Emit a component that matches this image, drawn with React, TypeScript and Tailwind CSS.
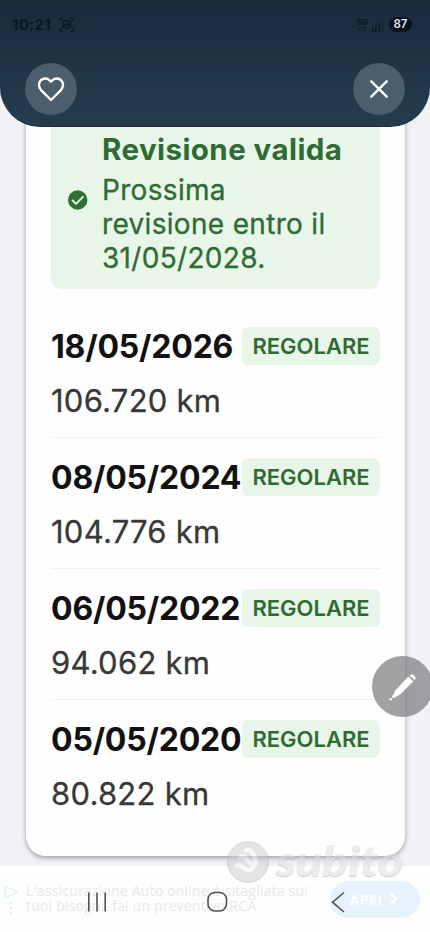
const inspections = [
  { date: "18/05/2026", km: "106.720 km" },
  { date: "08/05/2024", km: "104.776 km" },
  { date: "06/05/2022", km: "94.062 km" },
  { date: "05/05/2020", km: "80.822 km" },
];

function StatusBar() {
  return (
    <div className="flex h-[49px] items-center justify-between pl-[12px] pr-[18px] text-[#0b1520]">
      <div className="flex items-center gap-[8px]">
        <span className="text-[15px] font-bold leading-none tracking-[0.3px]">10:21</span>
        <svg width="15" height="15" viewBox="0 0 15 15" fill="none" stroke="currentColor" strokeWidth="1.3">
          <path d="M1 4V1.7Q1 1 1.7 1H4M11 1h2.3q.7 0 .7.7V4M14 11v2.3q0 .7-.7.7H11M4 14H1.700Q1 14 1 13.300V11" />
          <rect x="4" y="4" width="7.500" height="7" rx="1" />
          <path d="M4 10l2.500-2.500 1.500 1 1.500-1.500 2 2" />
        </svg>
      </div>
      <div className="flex items-center">
        <div className="flex flex-col items-center">
          <span className="text-[8px] font-bold leading-[8px]">5G</span>
          <svg width="8" height="6" viewBox="0 0 8 6" fill="none" stroke="currentColor" strokeWidth="1" opacity=".55">
            <path d="M2 5V1M.5 2.500L2 1l1.500 1.500M6 1v4M4.500 3.500L6 5l1.500-1.500" />
          </svg>
        </div>
        <svg className="ml-[3px] mt-[3px]" width="13" height="12" viewBox="0 0 13 12" fill="currentColor">
          <rect x="1" y="8" width="1.500" height="4" />
          <rect x="4" y="6" width="1.500" height="6" />
          <rect x="7.500" y="3" width="1.500" height="9" />
          <rect x="11" y="0" width="1.500" height="12" opacity=".35" />
        </svg>
        <span className="ml-[5px] flex h-[15px] w-[23px] items-center justify-center rounded-full bg-[#08111d] text-[11.500px] font-semibold leading-none text-[#dfe6ec]">
          87
        </span>
      </div>
    </div>
  );
}

function Header() {
  return (
    <header className="relative z-10 h-[127px] shrink-0 rounded-b-[40px] border-b border-[#1b2d3d] bg-linear-to-b from-[#192a3b] via-[#1f3343] to-[#263c4e]">
      <StatusBar />
      <div className="flex justify-between pl-[25px] pr-[25px] pt-[14px]">
        <button className="flex size-[52px] items-center justify-center rounded-full bg-[#4c5d6b]" aria-label="Preferiti">
          <svg width="28" height="26" viewBox="0 0 28 26" fill="none" stroke="#fff" strokeWidth="2.400" strokeLinejoin="round">
            <path d="M14 24L4.300 14.300C1.300 11.200 1.300 7 3.700 4.400C6.200 1.800 10.200 1.900 12.600 4.300L14 5.700L15.400 4.300C17.800 1.900 21.800 1.800 24.300 4.400C26.700 7 26.700 11.200 23.700 14.300Z" />
          </svg>
        </button>
        <button className="flex size-[52px] items-center justify-center rounded-full bg-[#4c5d6b]" aria-label="Chiudi">
          <svg width="20" height="20" viewBox="0 0 20 20" stroke="#fff" strokeWidth="2.400" strokeLinecap="round">
            <path d="M2.300 2.300l15.400 15.400M17.700 2.300l-15.400 15.400" />
          </svg>
        </button>
      </div>
    </header>
  );
}

function ValidityNotice() {
  return (
    <section className="flex h-[203px] items-end rounded-[10px] bg-[#e8f5e9] pb-[14px] text-[#2f6b33]">
      <svg className="mb-[65px] ml-[17px] mr-[14px] shrink-0" width="20" height="20" viewBox="0 0 20 20">
        <circle cx="9.700" cy="10" r="9.700" fill="#2e7132" />
        <path d="M4.200 10l3.800 3.800L15.400 6.300" fill="none" stroke="#e8f5e9" strokeWidth="1.900" />
      </svg>
      <div>
        <h2 className="mb-[7px] whitespace-nowrap text-[29.500px] font-bold leading-[34px] tracking-[0.430px]">Revisione valida</h2>
        <p className="whitespace-nowrap text-[28px] leading-[34px] tracking-[0.320px] [-webkit-text-stroke:0.300px_#2f6b33]">
          Prossima
          <br />
          revisione entro il
          <br />
          31/05/2028.
        </p>
      </div>
    </section>
  );
}

function AdBanner() {
  return (
    <div className="flex h-full items-center pl-[4px] pr-[10px] font-['Open_Sans',sans-serif]">
      <svg width="15" height="34" viewBox="0 0 15 34" fill="none" stroke="#e2ecf0" strokeWidth="1.300">
        <path d="M1 4v12l12-6z" />
        <path d="M7 20v2M7 25v2M7 30v2" strokeWidth="2" />
      </svg>
      <p className="-mt-[3px] ml-[7px] flex-1 whitespace-nowrap text-[14px] leading-[15px] tracking-[0.200px] text-[#e7e9ea]">
        L&apos;assicurazione Auto online è sitagliata sui
        <br />
        tuoi bisogni, fai un preventivo RCA
      </p>
      <span className="flex h-[37px] w-[90px] shrink-0 items-center justify-center gap-[8px] rounded-full bg-[#e6f2fd] pr-[2px] text-[14px] font-bold text-white">
        APRI
        <svg width="8" height="12" viewBox="0 0 8 12" fill="none" stroke="#fff" strokeWidth="2.500">
          <path d="M1 1l5 5-5 5" />
        </svg>
      </span>
    </div>
  );
}

function SystemNav() {
  return (
    <svg className="absolute left-[80px] top-[20px]" width="280" height="32" viewBox="0 0 280 32" fill="none" stroke="#505254" strokeWidth="1.600">
      <path d="M8.800 6.500v19M17 6.500v19M25.200 6.500v19" />
      <rect x="128" y="6.500" width="18.500" height="18.500" rx="7" />
      <path d="M264 6.500l-11.500 9.700 11.500 9.800" />
    </svg>
  );
}

function Watermark() {
  return (
    <div className="pointer-events-none absolute left-[226px] top-[840px] z-30 flex items-center opacity-50">
      <svg width="44" height="44" viewBox="0 0 44 44">
        <circle cx="22" cy="22" r="20.500" fill="#cbcccd" stroke="#b5b6b8" strokeWidth="1" />
        <path d="M14 17c3-2 6 1 8 4s4 4 7 3M20 10c4-1 7 3 8 6s2 5 2 8M11 25c2-1 5 1 7 3s6 3 9 0" fill="none" stroke="#f3f4f5" strokeWidth="4.500" strokeLinecap="round" />
      </svg>
      <span className="-mt-[4px] ml-[6px] origin-left scale-x-[1.160] font-['Lato',sans-serif] text-[42px] font-bold italic leading-[44px] text-[#dcdddf] [text-shadow:0_1px_1px_#999]">
        subito
      </span>
    </div>
  );
}

export default function App() {
  return (
    <div className="relative flex h-[932px] w-[430px] flex-col overflow-hidden bg-[#f1f2f6] font-['Inter',sans-serif]">
      <Header />
      <main className="-mt-[60px] h-[799px] shrink-0 pl-[26px] pr-[25px]">
        <article className="h-[789px] rounded-b-[20px] bg-[#fefefe] pl-[25px] pr-[25px] pt-[19px] shadow-[0_2px_5px_rgba(0,0,0,0.35)]">
          <ValidityNotice />
          <ul className="mt-[18px]">
            {inspections.map((item, i) => (
              <li key={item.date} className={`h-[131px] pt-[20px] ${i < 3 ? "border-b-[1.500px] border-[#f1f1f1]" : ""}`}>
                <div className="flex h-[38px] items-center justify-between">
                  <span className="w-[191px] shrink-0 whitespace-nowrap pt-[2px] text-[32px] font-bold leading-[40px] tracking-[-0.200px] text-[#121212]">{item.date}</span>
                  <span className="flex h-[38px] w-[138px] shrink-0 items-center justify-center rounded-[6px] bg-[#e8f5e9] text-[22px] font-semibold text-[#2f6b33]">
                    REGOLARE
                  </span>
                </div>
                <p className="mt-[15px] pt-[1px] text-[31px] leading-[40px] tracking-[0.250px] text-[#383838] [-webkit-text-stroke:0.300px_#383838]">{item.km}</p>
              </li>
            ))}
          </ul>
        </article>
      </main>
      <footer className="relative z-20 h-[66px] shrink-0 bg-[#fdfefe]">
        <AdBanner />
        <SystemNav />
      </footer>
      <Watermark />
      <button className="absolute left-[372px] top-[656px] z-20 flex size-[61px] items-center justify-center rounded-full bg-[#808284]/75" aria-label="Modifica">
        <svg width="30" height="30" viewBox="0 0 30 30" fill="#fff">
          <path d="M20.300 4.500l5 5L12 22.500l-6.800 3.800-1.200-1.200 3.600-6.800z" />
          <path d="M21.800 3.800l1.800-1.800q3.200.8 4.300 4.200l-1.600 1.800z" />
          <circle cx="2.800" cy="27.300" r="1.200" />
        </svg>
      </button>
    </div>
  );
}
